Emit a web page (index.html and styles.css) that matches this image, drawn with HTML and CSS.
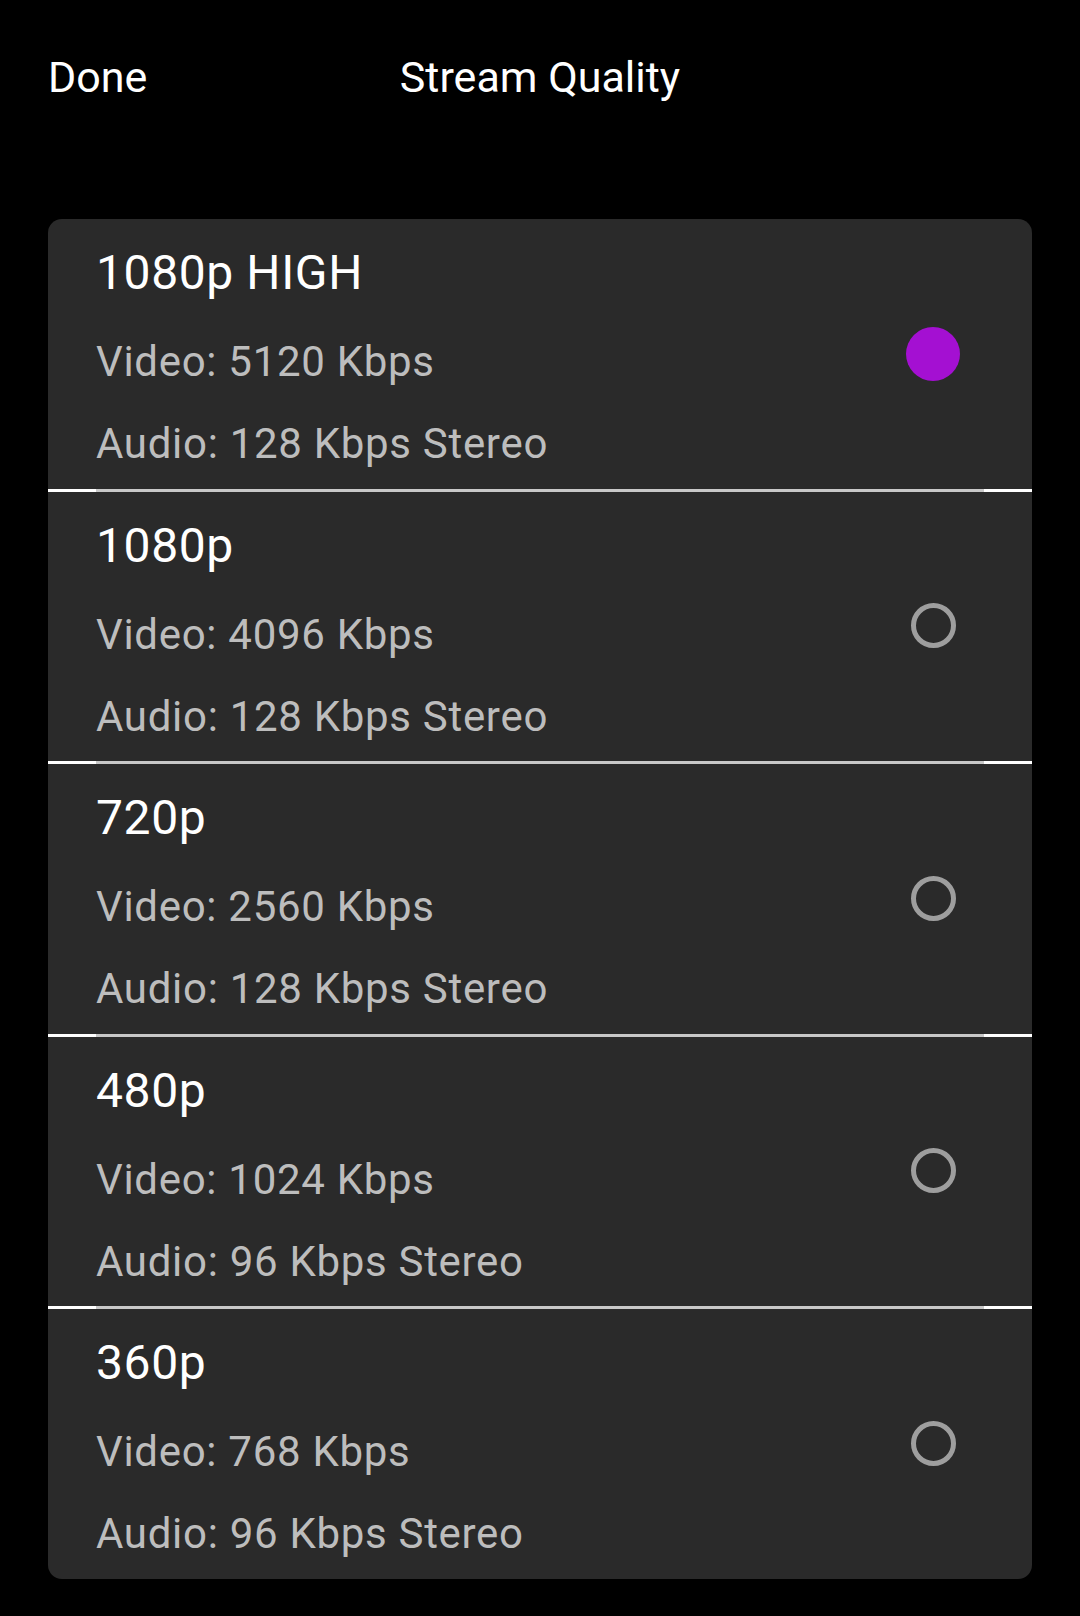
FILE: index.html
```html
<!DOCTYPE html>
<html>
<head>
<meta charset="utf-8">
<link rel="stylesheet" href="styles.css">
</head>
<body>
<div class="header">
  <div class="done">Done</div>
  <div class="title">Stream Quality</div>
  <div></div>
</div>
<div class="card">
  <div class="row">
    <div class="info">
      <div class="name">1080p HIGH</div>
      <div class="sub first">Video: 5120 Kbps</div>
      <div class="sub">Audio: 128 Kbps Stereo</div>
    </div>
    <div class="radio selected"></div>
  </div>
  <div class="divider"></div>
  <div class="row">
    <div class="info">
      <div class="name">1080p</div>
      <div class="sub first">Video: 4096 Kbps</div>
      <div class="sub">Audio: 128 Kbps Stereo</div>
    </div>
    <div class="radio"></div>
  </div>
  <div class="divider"></div>
  <div class="row">
    <div class="info">
      <div class="name">720p</div>
      <div class="sub first">Video: 2560 Kbps</div>
      <div class="sub">Audio: 128 Kbps Stereo</div>
    </div>
    <div class="radio"></div>
  </div>
  <div class="divider"></div>
  <div class="row">
    <div class="info">
      <div class="name">480p</div>
      <div class="sub first">Video: 1024 Kbps</div>
      <div class="sub">Audio: 96 Kbps Stereo</div>
    </div>
    <div class="radio"></div>
  </div>
  <div class="divider"></div>
  <div class="row">
    <div class="info">
      <div class="name">360p</div>
      <div class="sub first">Video: 768 Kbps</div>
      <div class="sub">Audio: 96 Kbps Stereo</div>
    </div>
    <div class="radio"></div>
  </div>
</div>
</body>
</html>
```
FILE: styles.css
```css
html, body {
  margin: 0;
  padding: 0;
  background: #000;
}
body {
  width: 1080px;
  height: 1616px;
  font-family: Roboto, "Noto Sans", sans-serif;
  color: #fff;
  overflow: hidden;
}
.header {
  display: grid;
  grid-template-columns: 1fr auto 1fr;
  align-items: center;
  padding: 45px 48px 0 48px;
  height: 64px;
  font-size: 43px;
  line-height: 64px;
}
.done {
  justify-self: start;
}
.title {
  justify-self: center;
}
.card {
  margin: 110px 48px 0 48px;
  background: #2a2a2a;
  border-radius: 14px;
  overflow: hidden;
}
.row {
  height: 269.5px;
  box-sizing: border-box;
  display: flex;
  align-items: center;
  justify-content: space-between;
  padding: 0 72px 0 48px;
}
.info {
  display: flex;
  flex-direction: column;
  align-self: flex-start;
  padding-top: 22px;
}
.name {
  font-size: 48px;
  line-height: 64px;
  letter-spacing: 0.6px;
  color: #fff;
}
.sub {
  font-size: 42px;
  line-height: 82px;
  letter-spacing: 0.7px;
  color: #bdbdbd;
}
.sub.first {
  margin-top: 16px;
}
.radio {
  width: 54px;
  height: 54px;
  box-sizing: border-box;
  border-radius: 50%;
  position: relative;
}
.radio::after {
  content: "";
  position: absolute;
  left: 5px;
  top: 4px;
  width: 45px;
  height: 45px;
  box-sizing: border-box;
  border: 5px solid #9e9e9e;
  border-radius: 50%;
}
.radio.selected {
  background: #a410d2;
}
.radio.selected::after {
  display: none;
}
.divider {
  height: 3px;
  background: #ffffff;
  display: flex;
}
.divider::after {
  content: "";
  flex: 1;
  margin: 0 48px;
  background: #c8c8c8;
}
```
